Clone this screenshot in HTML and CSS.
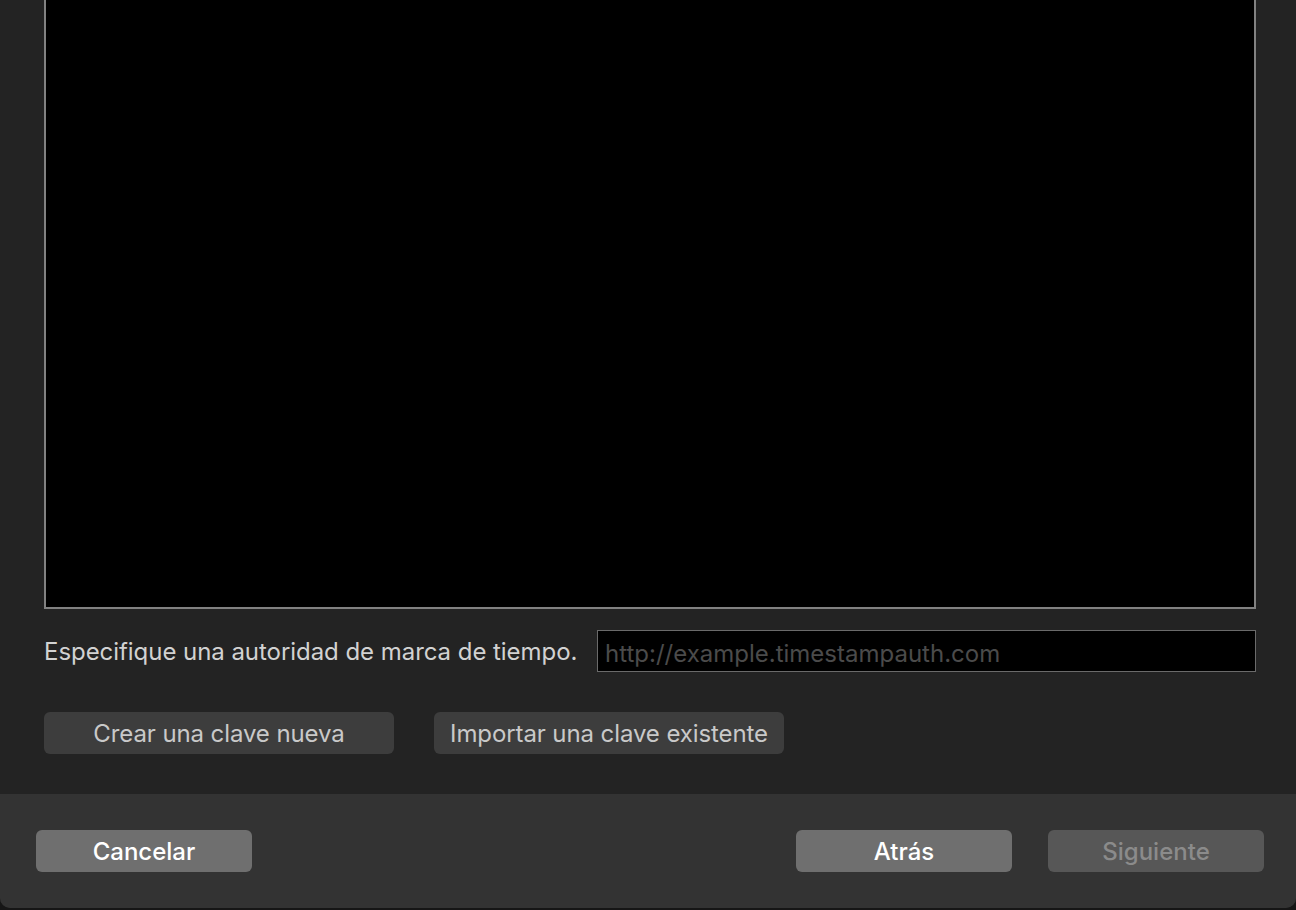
FILE: index.html
```html
<!DOCTYPE html>
<html lang="es">
<head>
<meta charset="utf-8">
<link rel="stylesheet" href="styles.css">
</head>
<body>
<div class="window">
  <div class="content">
    <div class="preview"></div>
    <div class="tsa-row">
      <span class="label">Especifique una autoridad de marca de tiempo.</span>
      <input class="tsa-input" type="text" placeholder="http://example.timestampauth.com">
    </div>
    <div class="key-row">
      <button class="btn key-btn">Crear una clave nueva</button>
      <button class="btn key-btn">Importar una clave existente</button>
    </div>
  </div>
  <div class="footer">
    <button class="btn foot-btn">Cancelar</button>
    <div class="spacer"></div>
    <button class="btn foot-btn">Atrás</button>
    <button class="btn foot-btn disabled">Siguiente</button>
  </div>
</div>
</body>
</html>
```
FILE: styles.css
```css
html, body {
  margin: 0;
  padding: 0;
  background: #161616;
  width: 1296px;
  height: 910px;
  overflow: hidden;
}
body {
  font-family: Inter, "Liberation Sans", sans-serif;
  font-size: 24px;
}
.window {
  height: 908px;
  background: #232323;
  display: flex;
  flex-direction: column;
  border-radius: 0 0 10px 10px;
  overflow: hidden;
}
.content {
  flex: 1;
  padding: 0 40px 0 44px;
  display: flex;
  flex-direction: column;
}
.preview {
  height: 607px;
  background: #000;
  border: 2px solid #818181;
  border-top: none;
}
.tsa-row {
  margin-top: 21px;
  display: flex;
  align-items: center;
  justify-content: space-between;
}
.label {
  color: #d2d2d2;
  font-size: 24px;
  letter-spacing: -0.05px;
}
.tsa-input {
  width: 659px;
  height: 42px;
  box-sizing: border-box;
  background: #000;
  border: 1px solid #6a6a6a;
  padding: 4px 7px 0;
  font-family: Inter, "Liberation Sans", sans-serif;
  font-size: 24px;
  color: #ddd;
  outline: none;
}
.tsa-input::placeholder {
  color: #4b4b4b;
}
.key-row {
  margin-top: 40px;
  display: flex;
  gap: 40px;
}
.btn {
  height: 42px;
  border: none;
  border-radius: 6px;
  font-family: Inter, "Liberation Sans", sans-serif;
  font-size: 24px;
  padding: 0;
}
.key-btn {
  width: 350px;
  background: #3d3d3d;
  color: #c9c9c9;
  letter-spacing: -0.1px;
}
.footer {
  height: 114px;
  box-sizing: border-box;
  background: #333333;
  padding: 36px 32px 0 36px;
  display: flex;
  align-items: flex-start;
  gap: 36px;
}
.spacer {
  flex: 1;
}
.foot-btn {
  width: 216px;
  background: #6f6f6f;
  color: #ffffff;
  font-weight: 500;
}
.foot-btn.disabled {
  background: #575757;
  color: #8b8b8b;
}
```
